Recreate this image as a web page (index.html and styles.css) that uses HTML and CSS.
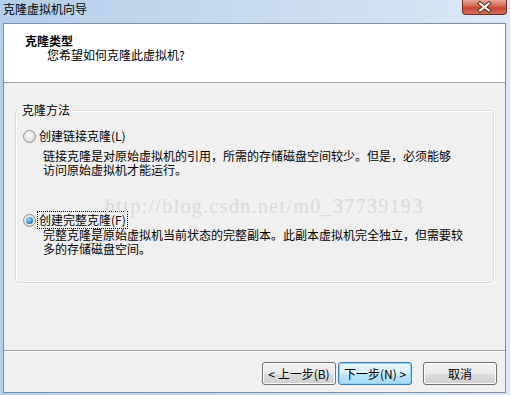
FILE: index.html
```html
<!DOCTYPE html>
<html lang="zh-CN">
<head>
  <meta charset="UTF-8" />
  <title>克隆虚拟机向导</title>
  <link rel="stylesheet" href="styles.css">
</head>
<body>
  <div class="window">
    <div class="titlebar">
      <span class="title">克隆虚拟机向导</span>
      <div class="close">
        <svg width="45" height="15" viewBox="0 0 45 15">
          <path d="M18 3.5 L27 10.5 M27 3.5 L18 10.5" stroke="#4a2a26" stroke-width="4" stroke-linecap="square"/>
          <path d="M18 3.5 L27 10.5 M27 3.5 L18 10.5" stroke="#fff" stroke-width="2" stroke-linecap="square"/>
        </svg>
      </div>
    </div>
    <div class="client">
      <div class="header">
        <div class="heading">克隆类型</div>
        <div class="subheading">您希望如何克隆此虚拟机?</div>
      </div>
      <div class="content">
        <fieldset class="group">
          <legend>克隆方法</legend>
          <div class="option first">
            <span class="radio"></span><span class="label">创建链接克隆(L)</span>
          </div>
          <p class="desc">链接克隆是对原始虚拟机的引用，所需的存储磁盘空间较少。但是，必须能够<br>访问原始虚拟机才能运行。</p>
          <div class="option second">
            <span class="radio checked"></span><span class="label focused">创建完整克隆(F)</span>
          </div>
          <p class="desc tight">完整克隆是原始虚拟机当前状态的完整副本。此副本虚拟机完全独立，但需要较<br>多的存储磁盘空间。</p>
        </fieldset>
        <div class="watermark">http://blog.csdn.net/m0_37739193</div>
      </div>
      <div class="footer">
        <button class="btn">&lt; 上一步(B)</button>
        <button class="btn default">下一步(N) &gt;</button>
        <button class="btn cancel">取消</button>
      </div>
    </div>
  </div>
</body>
</html>
```
FILE: styles.css
```css
body { margin: 0; font-family: "Noto Sans CJK SC", "Noto Sans", sans-serif; font-size: 12px; color: #000; }
.window { width: 510px; height: 395px; display: flex; flex-direction: column;
  background: linear-gradient(to right, #b4cee9, #c9dcf1 55%, #dbe8f6); }
.titlebar { height: 23px; display: flex; justify-content: space-between; align-items: flex-start; }
.title { padding: 2px 0 0 3px; line-height: 14px; }
.close { width: 45px; height: 15px; margin-right: 3px; box-sizing: border-box;
  border: 1px solid #6b2b24; border-top: none; border-radius: 0 0 4px 4px;
  background: linear-gradient(#e9a798, #d4644f 45%, #c7452f 55%, #d27260); }
.close svg { display: block; margin-left: -1px; }
.client { margin-left: 3px; width: 503px; height: 370px; box-sizing: border-box;
  border: 1px solid #7f8f9f; display: flex; flex-direction: column; background: #f0f0f0; }
.header { height: 59px; box-sizing: border-box; flex: none; background: #fff;
  border-bottom: 1px solid #a0a0a0; padding: 10px 0 0 21px; }
.header div { line-height: 14px; }
.heading { font-weight: bold; }
.subheading { padding-left: 22px; }
.content { flex: 1; position: relative; padding: 20px 11px 0; }
.group { margin: 0; padding: 0 0 26px; border: 1px solid #d5dfe5; border-radius: 3px;
  box-shadow: 1px 1px 0 #fff, inset 1px 1px 0 #fff; }
.group legend { margin-left: 4px; padding: 0 2px; line-height: 14px; }
.option { display: flex; align-items: center; margin-left: 6px; line-height: 14px; }
.option.first { margin-top: 11px; }
.option.second { margin-top: 35px; }
.radio { width: 13px; height: 13px; box-sizing: border-box; border-radius: 50%; margin: 2px 3px 0 1px;
  border: 1px solid #8e8f8f; background: radial-gradient(circle at 45% 40%, #fafafa, #e6e6e6 55%, #c8c8c8);
  position: relative; }
.radio.checked::after { content: ""; position: absolute; left: 2px; top: 2px; width: 7px; height: 7px;
  border-radius: 50%; background: radial-gradient(circle at 40% 35%, #a6dcfb, #3d8fcb 55%, #1b5b8e); }
.label.focused { outline: 1px dotted #000; outline-offset: 1px; }
.desc { margin: 6px 0 0 27px; line-height: 14px; white-space: nowrap; }
.desc.tight { margin-top: 1px; }
.watermark { position: absolute; left: 101px; top: 113px; font-family: "Liberation Serif", serif;
  font-size: 20px; line-height: 20px; letter-spacing: 1.35px; color: #d9d9d9; white-space: nowrap; }
.footer { height: 42px; flex: none; border-top: 1px solid #a0a0a0; box-shadow: inset 0 1px 0 #fff;
  display: flex; justify-content: flex-end; align-items: flex-start; padding: 11px 8px 0 0; box-sizing: border-box; }
.btn { width: 74px; height: 23px; margin-left: 2px; padding: 0; font: inherit; color: #000;
  border: 1px solid #707070; border-radius: 3px;
  background: linear-gradient(#f2f2f2, #ebebeb 50%, #dddddd 51%, #cfcfcf);
  box-shadow: inset 0 0 0 1px #fbfbfb; }
.btn.default { border-color: #3c7fb1; box-shadow: inset 0 0 0 1px #8fd4f7;
  background: linear-gradient(#eaf6fd, #d9f0fc 50%, #bee6fd 51%, #a7d9f5); }
.btn.cancel { margin-left: 11px; }
```
